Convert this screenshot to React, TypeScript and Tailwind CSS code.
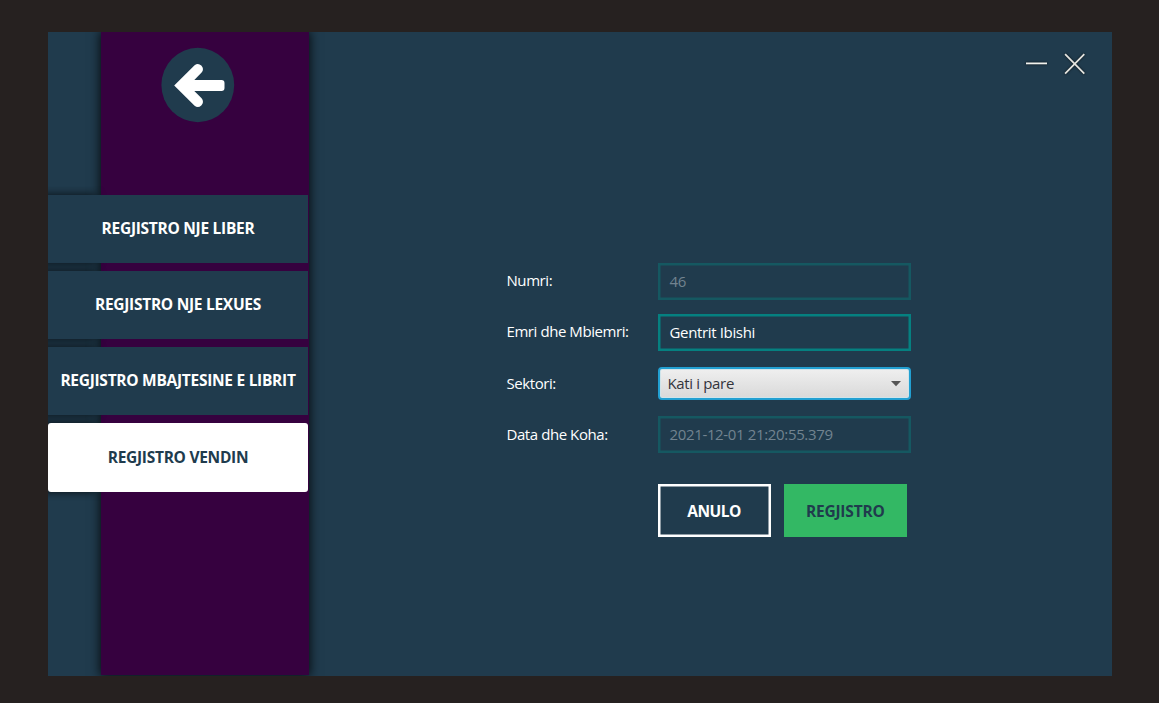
import type { ReactNode } from "react";

const entries = ["REGJISTRO NJE LIBER", "REGJISTRO NJE LEXUES", "REGJISTRO MBAJTESINE E LIBRIT"];

function Label({ children, className }: { children: ReactNode; className: string }) {
  return (
    <span className={`w-[151px] tracking-[-0.43px] whitespace-nowrap text-white ${className}`}>{children}</span>
  );
}

export default function App() {
  return (
    <div className="h-[703px] w-[1159px] bg-[#262120] pt-[32px] pl-[48px] font-['Open_Sans','Noto_Sans',sans-serif] text-[15px]">
      <div className="flex h-[644px] w-[1064px] overflow-hidden bg-[#203b4d]">
        <aside className="grid w-[260px] grid-cols-[260px] grid-rows-[644px]">
          <div className="col-start-1 row-start-1 ml-[52.5px] h-[642.7px] w-[208.2px] bg-[#36013f] shadow-[0_0_10px_1px_rgba(0,0,0,0.8)]" />
          <div className="relative col-start-1 row-start-1 flex flex-col">
            <button aria-label="Kthehu" className="mt-[15px] ml-[113px] h-[76px] w-[74px]">
              <svg viewBox="0 0 74 76" className="h-[76px] w-[74px]">
                <ellipse cx="36.8" cy="38" rx="36.4" ry="37.2" fill="#203b4d" />
                <path
                  d="M13.2 38.5 33.6 18.2Q37 15.5 40.3 18.4Q43.5 22 40.6 25.6L33.3 33.1H60.5Q63.5 33.1 63.5 36V41Q63.5 44 60.5 44H33.3L40.6 51.3Q43.5 55 40.3 58.4Q37 61.4 33.6 58.7Z"
                  fill="#fff"
                />
              </svg>
            </button>
            <nav className="mt-[71.6px] flex flex-col gap-[8.2px] text-[15.5px] font-bold tracking-[-0.28px]">
              {entries.map((label) => (
                <button
                  key={label}
                  className="h-[68px] w-[260px] bg-[#203b4d] whitespace-nowrap text-white shadow-[-212px_0_9px_rgba(0,0,0,0.75)] [clip-path:inset(-8px_0_-8px_0)]"
                >
                  {label}
                </button>
              ))}
              <button className="h-[69.3px] w-[260px] rounded-[3px] bg-white pb-[0.5px] whitespace-nowrap text-[#203b4d] shadow-[-212px_0_9px_rgba(0,0,0,0.75)] [clip-path:inset(-8px_0_-8px_0)]">
                REGJISTRO VENDIN
              </button>
            </nav>
          </div>
        </aside>

        <main className="flex flex-1 flex-col">
          <div className="flex h-[64px] items-center justify-end gap-[14px] pr-[26px]">
            <svg viewBox="0 0 24 24" className="h-6 w-6 drop-shadow-[0_0_1px_rgba(0,0,0,0.8)]" fill="none">
              <path d="M2 11.4H23" stroke="#f2f2ee" strokeWidth="1.8" />
            </svg>
            <svg viewBox="0 0 24 24" className="h-6 w-6 drop-shadow-[0_0_1px_rgba(0,0,0,0.8)]" fill="none">
              <path d="M3.1 2.2 22.3 21.6M22.3 2.2 3.1 21.6" stroke="#e4e4df" strokeWidth="1.8" />
            </svg>
          </div>

          <form className="mt-[167px] ml-[198.5px] flex w-[404px] flex-col tracking-[-0.35px]">
            <div className="flex items-center">
              <Label className="pb-[3px]">Numri:</Label>
              <div className="flex h-[37.3px] w-[253px] items-center pb-[1px] pl-[12px] text-[#728390] inset-ring-[2.5px] inset-ring-[#155861]">
                46
              </div>
            </div>
            <div className="mt-[13.5px] flex items-center">
              <Label className="pb-[3px]">Emri dhe Mbiemri:</Label>
              <div className="flex h-[37.3px] w-[253px] items-center pl-[12px] text-white inset-ring-[2.5px] inset-ring-[#058080]">
                Gentrit Ibishi
              </div>
            </div>
            <div className="mt-[16px] flex items-center">
              <Label className="pb-[1.4px]">Sektori:</Label>
              <div className="flex h-[33px] w-[253px] items-center justify-between rounded-[4px] border-2 border-[#22a0d2] bg-linear-to-b from-[#efefef] to-[#d9d9d9] pr-[8px] pl-[8px] text-[#33343c] inset-ring inset-ring-[#cfe4ea]">
                <span className="pb-[1px]">Kati i pare</span>
                <svg viewBox="0 0 10 6" className="h-[6px] w-[10px]">
                  <path d="M0 0H10L5 5.2Z" fill="#555" />
                </svg>
              </div>
            </div>
            <div className="mt-[15.7px] flex items-center">
              <Label className="pb-0">Data dhe Koha:</Label>
              <div className="flex h-[37.3px] w-[253px] items-center pl-[12px] text-[#728390] inset-ring-[2.5px] inset-ring-[#155861]">
                2021-12-01 21:20:55.379
              </div>
            </div>
            <div className="mt-[31.2px] ml-[151px] flex gap-[13px] text-[15.5px] font-bold">
              <button
                type="button"
                className="h-[52.5px] w-[113px] pt-[2px] tracking-[-0.5px] text-white inset-ring-[2.5px] inset-ring-white"
              >
                ANULO
              </button>
              <button
                type="button"
                className="h-[52.5px] w-[123.5px] bg-[#33b864] pt-[2px] tracking-[-0.2px] text-[#203b4d]"
              >
                REGJISTRO
              </button>
            </div>
          </form>
        </main>
      </div>
    </div>
  );
}
